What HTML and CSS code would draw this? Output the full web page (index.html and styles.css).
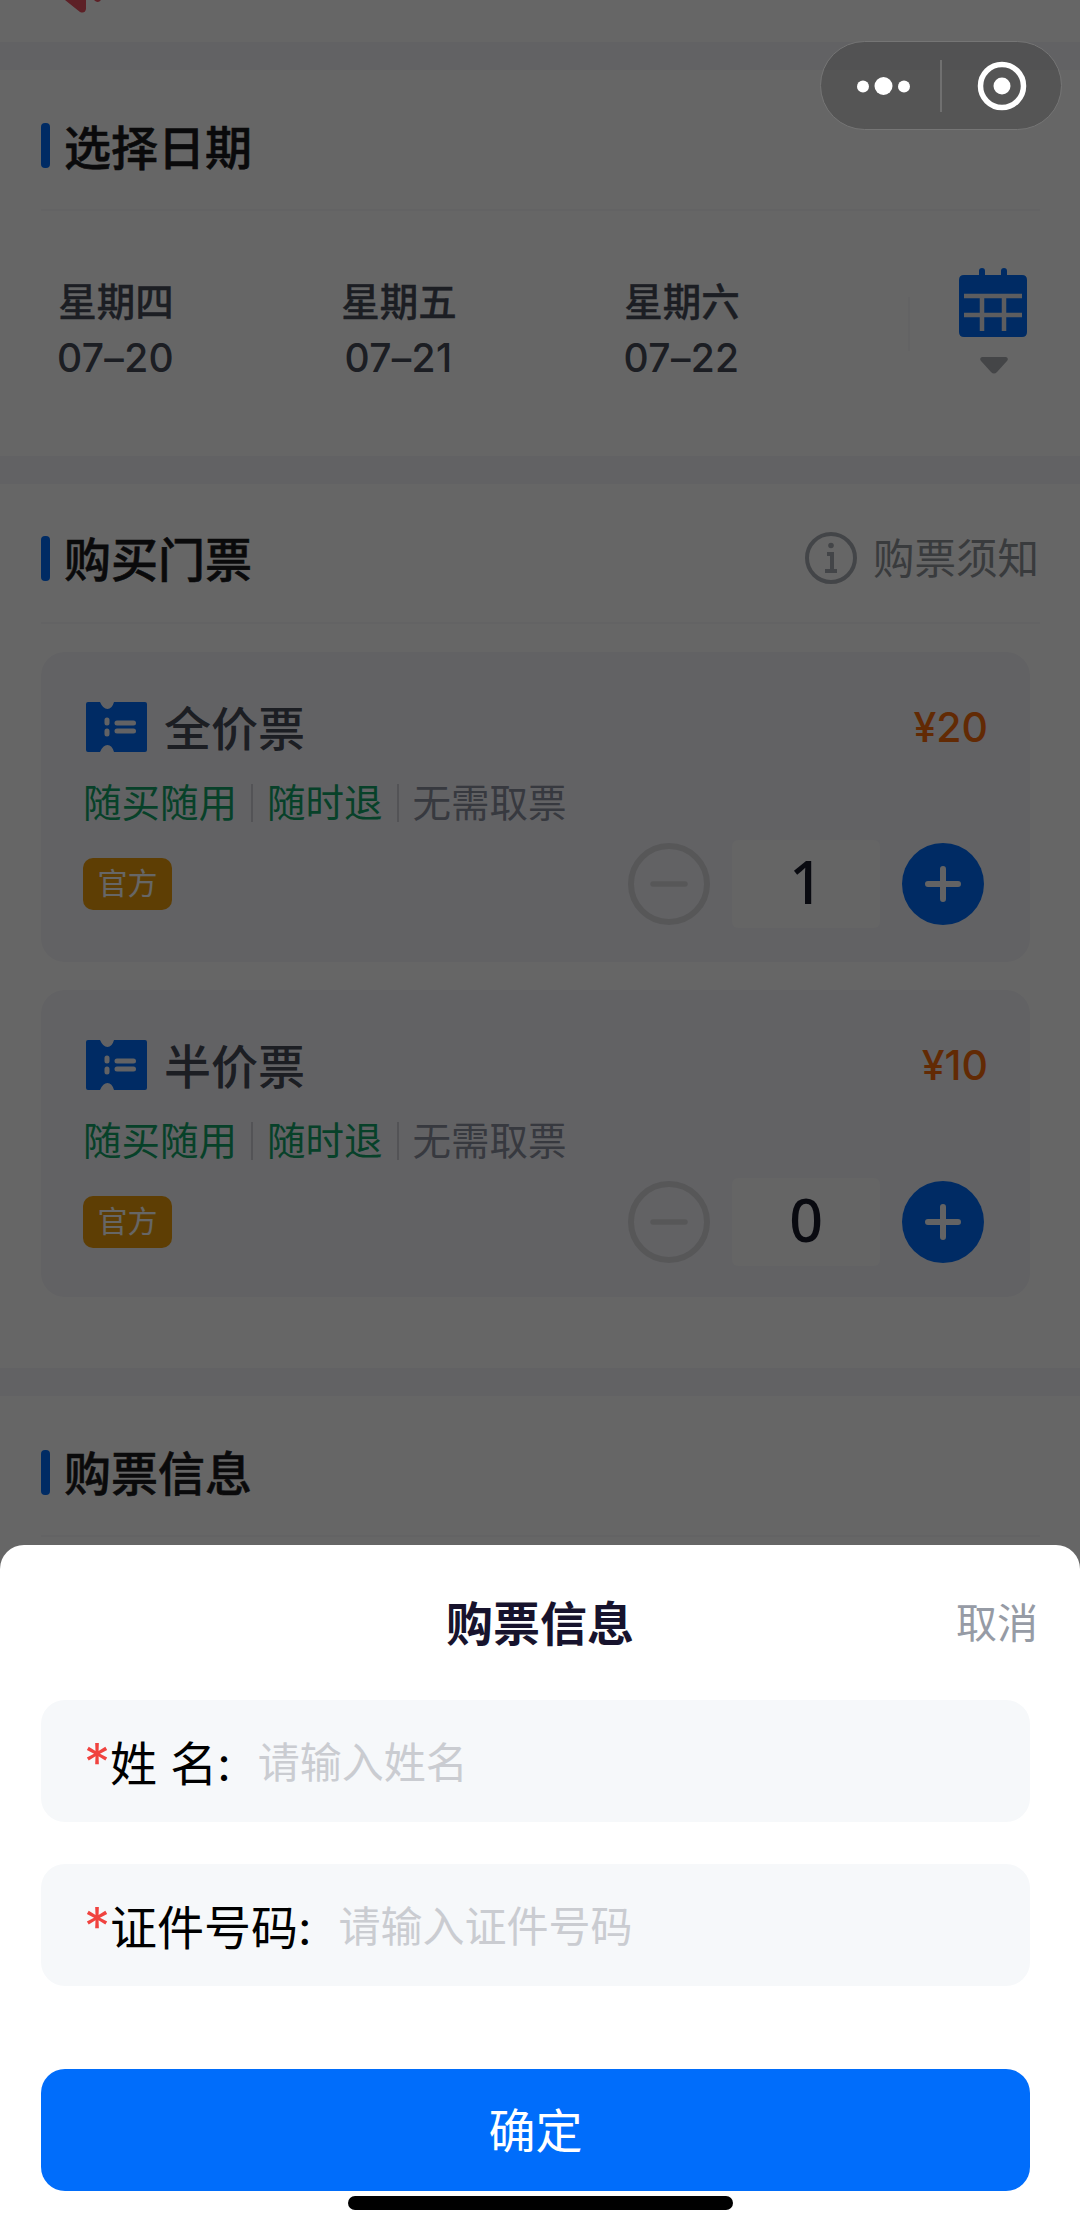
FILE: index.html
```html
<!DOCTYPE html>
<html lang="zh-CN">
<head>
<meta charset="utf-8">
<title>购票信息</title>
<link rel="stylesheet" href="styles.css">
</head>
<body>
<div class="screen">
  <svg width="0" height="0" class="defs">
    <symbol id="ticket" viewBox="0 0 61 50">
      <path fill="#006dfb" d="M2 0H14Q17 7 21.5 7Q26 7 28 0H59Q61 0 61 2V48Q61 50 59 50H28Q26 43 21.5 43Q17 43 14 50H2Q0 50 0 48V2Q0 0 2 0Z"/>
      <path fill="none" stroke="#f5f5fa" stroke-width="5" stroke-linecap="round" d="M21 18V21M21 29V32M31 21H47.500M31 29H47.500"/>
    </symbol>
    <symbol id="minus" viewBox="0 0 82 82">
      <circle cx="41" cy="41" r="38" fill="none" stroke="#d9d9dd" stroke-width="6"/>
      <path d="M25 41H57" stroke="#d9d9dd" stroke-width="5.500" stroke-linecap="round"/>
    </symbol>
    <symbol id="plus" viewBox="0 0 82 82">
      <circle cx="41" cy="41" r="41" fill="#006dfb"/>
      <path d="M26 41H56M41 26V56" stroke="#f7f7fa" stroke-width="6" stroke-linecap="round"/>
    </symbol>
  </svg>

  <main class="page">
    <section class="notice">
      <svg width="50" height="14" viewBox="0 0 50 14"><path fill="#e8505f" d="M12 0L27 12Q32 14 33 9V0ZM41 0Q45 4 48 0Z"/></svg>
    </section>

    <section class="panel dates-panel">
      <header class="panel-head"><i class="mark"></i><h2>选择日期</h2></header>
      <div class="dates">
        <div class="date"><span>星期四</span><span class="num">07–20</span></div>
        <div class="date"><span>星期五</span><span class="num">07–21</span></div>
        <div class="date"><span>星期六</span><span class="num">07–22</span></div>
        <div class="calendar">
          <i class="calendar-line"></i>
          <svg width="68" height="106" viewBox="0 0 68 106">
            <path fill="#006dfb" d="M5 7H20V3Q20 0 23 0T26 3V7H42V3Q42 0 45 0T48 3V7H63Q68 7 68 12V64Q68 69 63 69H5Q0 69 0 64V12Q0 7 5 7Z"/>
            <path stroke="#e9e9ee" stroke-width="4.500" d="M5 28H63M5 47H63M23 28V63M45 28V63" fill="none"/>
            <path fill="#aaacb1" d="M23 89H47Q50 90 48 93L38 104Q35 107 32 104L22 93Q20 90 23 89Z"/>
          </svg>
        </div>
      </div>
    </section>

    <section class="panel tickets-panel">
      <header class="panel-head"><i class="mark"></i><h2>购买门票</h2>
        <div class="rules">
          <svg width="52" height="52" viewBox="0 0 52 52" fill="none" stroke="#a9adb3" stroke-width="4"><circle cx="26" cy="26" r="24"/><path d="M22 22H27V39M20 39H32"/><circle cx="26" cy="13.500" r="2.800" fill="#a9adb3" stroke="none"/></svg>
          <span>购票须知</span>
        </div>
      </header>
      <div class="cards">
        <article class="card">
          <div class="card-title"><svg class="ticket"><use href="#ticket"/></svg><h3>全价票</h3><span class="price">¥20</span></div>
          <div class="tags"><span>随买随用</span><i></i><span>随时退</span><i></i><span class="plain">无需取票</span></div>
          <div class="card-foot">
            <span class="badge">官方</span>
            <div class="stepper"><svg class="step"><use href="#minus"/></svg><span class="count">1</span><svg class="step"><use href="#plus"/></svg></div>
          </div>
        </article>
        <article class="card">
          <div class="card-title"><svg class="ticket"><use href="#ticket"/></svg><h3>半价票</h3><span class="price">¥10</span></div>
          <div class="tags"><span>随买随用</span><i></i><span>随时退</span><i></i><span class="plain">无需取票</span></div>
          <div class="card-foot">
            <span class="badge">官方</span>
            <div class="stepper"><svg class="step"><use href="#minus"/></svg><span class="count">0</span><svg class="step"><use href="#plus"/></svg></div>
          </div>
        </article>
      </div>
    </section>

    <section class="panel info-panel">
      <header class="panel-head"><i class="mark"></i><h2>购票信息</h2></header>
    </section>
  </main>

  <div class="mask"></div>

  <div class="capsule">
    <svg width="54" height="20" viewBox="0 0 54 20" fill="#fff"><circle cx="6" cy="10.500" r="6"/><circle cx="26.500" cy="10" r="9"/><circle cx="47" cy="10.500" r="6"/></svg>
    <i class="capsule-line"></i>
    <svg width="50" height="50" viewBox="0 0 50 50"><circle cx="25" cy="25" r="21.500" fill="none" stroke="#fff" stroke-width="5.500"/><circle cx="25" cy="25" r="8.500" fill="#fff"/></svg>
  </div>

  <section class="sheet">
    <header class="sheet-head"><h2>购票信息</h2><span class="cancel">取消</span></header>
    <div class="field"><label><b>*</b>姓 名:</label><span class="placeholder">请输入姓名</span></div>
    <div class="field"><label><b>*</b>证件号码:</label><span class="placeholder">请输入证件号码</span></div>
    <button class="confirm">确定</button>
    <i class="home"></i>
  </section>
</div>
</body>
</html>
```
FILE: styles.css
```css
* { box-sizing: border-box; }
body, h2, h3 { margin: 0; }
body { font-family: "Inter", "Noto Sans CJK SC", sans-serif; }
.defs { position: absolute; }
svg { display: block; flex: none; }
.screen { position: relative; width: 1080px; height: 2232px; overflow: hidden; background: #f5f5fa; }
.page { display: flex; flex-direction: column; gap: 28px; }
.notice { height: 42px; background: #fff; padding-left: 53px; }
.panel { background: #fff; padding: 0 40px 0 41px; }
.dates-panel { height: 386px; }
.tickets-panel { height: 884px; }
.info-panel { height: 300px; }
.panel-head { display: flex; align-items: center; height: 141px; padding-top: 12px; border-bottom: 2px solid #f8f8fa; }
.tickets-panel .panel-head { height: 140px; padding-top: 10px; }
.info-panel .panel-head { padding-top: 13px; }
.mark { width: 9px; height: 45px; border-radius: 4px; background: #006dfb; margin-right: 14px; flex: none; }
h2 { font-size: 47px; line-height: 60px; font-weight: 500; font-family: "Noto Sans CJK SC", sans-serif; color: #1a1a1d; }
.panel-head h2 { padding-bottom: 2px; -webkit-text-stroke: .6px currentColor; }
.rules { display: flex; align-items: center; gap: 16px; margin-left: auto; margin-right: 1px; font-size: 41.5px; line-height: 50px; color: #8f9399; }
.rules span { padding-top: 1px; }
.dates { display: flex; align-items: flex-start; gap: 133px; padding-top: 57px; }
.date { width: 150px; display: flex; flex-direction: column; align-items: center; font-size: 38.5px; line-height: 55px; font-weight: 500; color: #464b59; padding-top: 7px; -webkit-text-stroke: .3px currentColor; }
.date .num { font-size: 39px; letter-spacing: .3px; white-space: nowrap; margin-left: -1px; -webkit-text-stroke: 0; }
.calendar { display: flex; margin-left: 18px; }
.calendar-line { width: 2px; height: 54px; margin: 29px 49px 0 0; background: #f8f8fa; }
.dates > * { flex: none; }
.dates { margin-right: -40px; }

.cards { display: flex; flex-direction: column; gap: 28px; padding-top: 28px; width: 989px; }
.card { height: 310px; border-radius: 24px; background: #f5f5fa; padding: 44px 42px 0 42px; }
.card + .card { height: 307px; }
.card-title { display: flex; align-items: center; height: 62px; padding-left: 3px; }
.ticket { width: 61px; height: 50px; }
h3 { margin-left: 17px; padding-top: 3px; font-size: 47px; line-height: 60px; font-weight: 500; color: #464b59; }
.price { margin-left: auto; font-size: 41px; font-weight: 500; color: #f56a0c; }
.tags { display: flex; align-items: center; height: 80px; font-size: 38.5px; line-height: 56px; color: #12a468; }
.tags span { padding-top: 10px; }
.tags i { width: 2px; height: 38px; margin: 10px 14px 0; background: #cfd0d8; }
.tags .plain { color: #8a8e9d; }
.card-foot { display: flex; align-items: center; justify-content: space-between; height: 91px; }
.badge { width: 89px; height: 52px; border-radius: 10px; background: #eb9c0c; color: #fff; font-size: 30px; line-height: 50px; text-align: center; }
.stepper { display: flex; align-items: center; gap: 22px; margin-right: 4px; }
.step { width: 82px; height: 82px; }
.count { width: 148px; height: 88px; border-radius: 6px; background: #fcfcfd; text-align: center; font: 500 59px/82px "Noto Sans", sans-serif; color: #171929; }

.mask { position: absolute; inset: 0; background: rgba(0, 0, 0, .6); }
.capsule { position: absolute; left: 820px; top: 41px; width: 242px; height: 89px; border-radius: 45px; border: 1.5px solid #757575; background: rgba(0, 0, 0, .16); display: flex; align-items: center; padding-left: 36px; }
.capsule-line { width: 2px; height: 52px; background: #707070; margin: 0 35px 0 29px; }

.sheet { position: absolute; left: 0; right: 0; bottom: 0; height: 687px; border-radius: 24px 24px 0 0; background: #fff; padding: 0 50px 0 41px; display: flex; flex-direction: column; }
.sheet-head { display: grid; grid-template-columns: 1fr auto 1fr; align-items: center; height: 155px; margin-right: -9px; }
.sheet-head h2 { grid-column: 2; font-weight: 700; color: #17132d; padding-bottom: 4px; }
.cancel { justify-self: end; font-size: 41px; color: #969ba5; padding-bottom: 6px; margin-right: 1px; }
.field { display: flex; align-items: center; height: 122px; margin-bottom: 42px; border-radius: 24px; background: #f6f8fa; padding-left: 43px; }
.field label { font-size: 47px; line-height: 60px; color: #000; white-space: pre; padding-top: 5px; }
.field b { font-weight: 400; font-size: 52px; line-height: 0; color: #f0433f; }
.placeholder { margin-left: 27px; font-size: 42px; line-height: 60px; color: #caccd1; padding-top: 3px; }
.confirm { height: 122px; margin-top: 41px; border: 0; border-radius: 24px; background: #006dfb; color: #fff; font: 400 47px/1 "Noto Sans CJK SC", sans-serif; padding: 0 0 6px; flex: none; }
.home { width: 385px; height: 14px; border-radius: 7px; background: #000; margin: 5px 0 0 307px; }
```
